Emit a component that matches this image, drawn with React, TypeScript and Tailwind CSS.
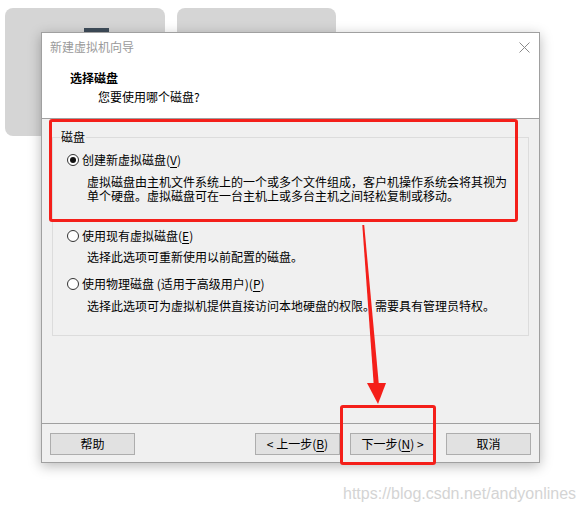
import React from 'react';

const font = "font-['Noto_Sans_CJK_SC',sans-serif]";

function Radio({ checked }: { checked?: boolean }) {
  return (
    <span className="flex h-[12px] w-[12px] shrink-0 items-center justify-center rounded-full border border-[#333333] bg-white">
      {checked && <span className="h-[6px] w-[6px] rounded-full bg-[#111111]" />}
    </span>
  );
}

function Option({
  checked,
  label,
  accel,
  className,
}: {
  checked?: boolean;
  label: string;
  accel: string;
  className?: string;
}) {
  return (
    <div className={`flex h-[16px] items-center gap-[3px] pl-[14px] ${className ?? ''}`}>
      <Radio checked={checked} />
      <span className="leading-[16px]">
        {label}(<span className="underline underline-offset-2">{accel}</span>)
      </span>
    </div>
  );
}

function Desc({ lines, className }: { lines: string[]; className?: string }) {
  return (
    <div className={`pl-[34px] ${className ?? ''}`}>
      {lines.map((l) => (
        <div key={l} className="h-[14px] whitespace-nowrap leading-[14px]">
          {l}
        </div>
      ))}
    </div>
  );
}

function Button({ children }: { children: React.ReactNode }) {
  return (
    <div className="flex h-[22px] w-[85px] items-center justify-center border border-[#adadad] bg-[#e1e1e1] leading-[16px]">
      {children}
    </div>
  );
}

export default function App() {
  return (
    <div className={`relative h-[511px] w-[583px] overflow-hidden bg-white ${font} text-[12px] text-black`}>
      {/* app cards behind the wizard */}
      <div className="flex gap-[12px] pl-[5px] pt-[8px]">
        <div className="relative h-[128px] w-[160px] rounded-[8px] bg-[#d5d5d5]">
          <div className="absolute left-[79px] top-[20px] h-[30px] w-[25px] bg-[#3f4d5a]" />
        </div>
        <div className="h-[128px] w-[159px] rounded-[8px] bg-[#d5d5d5]" />
      </div>

      {/* wizard dialog */}
      <div className="absolute left-[41px] top-[32px] flex h-[431px] w-[499px] flex-col border border-[#a0a0a0] bg-[#f0f0f0] shadow-[0_3px_12px_rgba(0,0,0,0.28)]">
        <div className="h-[86px] border-b border-[#a0a0a0] bg-white">
          <div className="flex h-[16px] items-center justify-between pl-[8px] pr-[9px] mt-[6px]">
            <span className="leading-[16px] text-[#9a9a9a]">新建虚拟机向导</span>
            <svg width="11" height="11" viewBox="0 0 11 11">
              <path d="M0.5 0.5L10.5 10.5M10.5 0.5L0.5 10.5" stroke="#8a8a8a" strokeWidth="1" />
            </svg>
          </div>
          <div className="mt-[15px] h-[16px] pl-[28px] font-bold leading-[16px]">选择磁盘</div>
          <div className="mt-[3px] h-[16px] pl-[56px] leading-[16px]">您要使用哪个磁盘?</div>
        </div>

        <div className="flex-1">
          <div className="relative ml-[10px] mt-[18px] h-[199px] w-[477px] border border-[#dcdcdc]">
            <span className="absolute -top-[9px] left-[7px] bg-[#f0f0f0] px-[1px] leading-[16px]">磁盘</span>
            <div className="pt-[14px]">
              <Option checked label="创建新虚拟磁盘" accel="V" />
              <Desc
                className="mt-[7px]"
                lines={[
                  '虚拟磁盘由主机文件系统上的一个或多个文件组成，客户机操作系统会将其视为',
                  '单个硬盘。虚拟磁盘可在一台主机上或多台主机之间轻松复制或移动。',
                ]}
              />
              <Option className="mt-[25px]" label="使用现有虚拟磁盘" accel="E" />
              <Desc className="mt-[6px]" lines={['选择此选项可重新使用以前配置的磁盘。']} />
              <Option className="mt-[12px]" label="使用物理磁盘 (适用于高级用户)" accel="P" />
              <Desc className="mt-[7px]" lines={['选择此选项可为虚拟机提供直接访问本地硬盘的权限。需要具有管理员特权。']} />
            </div>
          </div>
        </div>

        <div className="flex h-[39px] border-t border-[#a0a0a0] px-[8px] pt-[9px]">
          <Button>帮助</Button>
          <div className="flex-1" />
          <Button>
            &lt; 上一步(<span className="underline underline-offset-2">B</span>)
          </Button>
          <div className="ml-[10px]">
            <Button>
              下一步(<span className="underline underline-offset-2">N</span>) &gt;
            </Button>
          </div>
          <div className="ml-[11px]">
            <Button>取消</Button>
          </div>
        </div>
      </div>

      {/* annotations */}
      <div className="absolute left-[49px] top-[119px] h-[103px] w-[469px] rounded-[3px] border-[3px] border-[#f41f1a]" />
      <div className="absolute left-[340px] top-[405px] h-[60px] w-[96px] rounded-[3px] border-[3px] border-[#f41f1a]" />
      <svg className="pointer-events-none absolute left-0 top-0" width="583" height="511">
        <polygon points="362.3,225 364.2,225 379,386 373.8,386" fill="#f41f1a" />
        <polygon points="367,383 386,383 378,404" fill="#f41f1a" />
      </svg>

      <div className="absolute left-[343px] top-[484px] font-['Liberation_Sans',sans-serif] text-[16px] leading-[20px] text-[#d4d4d4]">
        https://blog.csdn.net/andyonlines
      </div>
    </div>
  );
}
